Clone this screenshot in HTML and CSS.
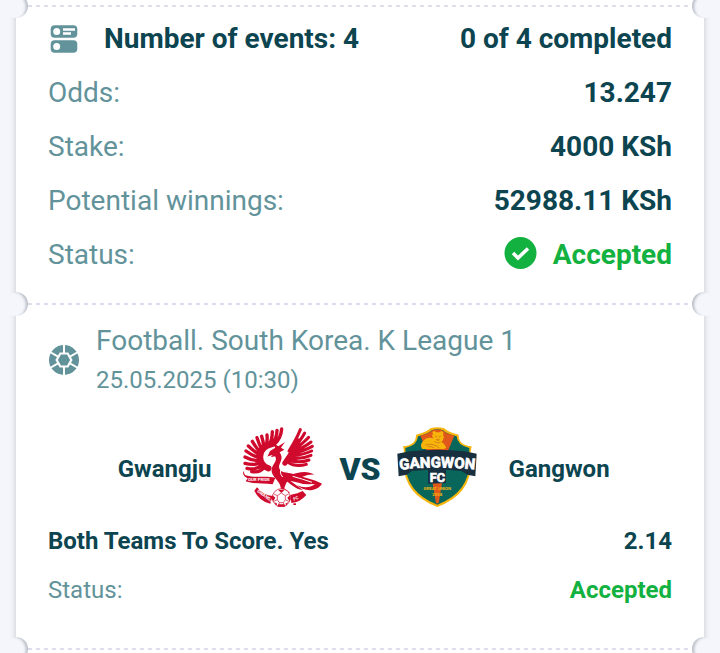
FILE: index.html
```html
<!DOCTYPE html>
<html lang="en">
<head>
<meta charset="UTF-8">
<meta name="viewport" content="width=device-width, initial-scale=1.0">
<title>Bet slip</title>
<link rel="stylesheet" href="styles.css">
</head>
<body>

<main class="ticket">
    <div class="divider"></div>

    <section class="summary">
        <header class="summary-head">
            <svg class="icon" viewBox="0 0 32 32" aria-hidden="true">
                <rect x="2.700" y="2.300" width="26.600" height="12.500" rx="4" fill="#62939a"/>
                <rect x="2.700" y="17.300" width="26.600" height="12.500" rx="4" fill="#62939a"/>
                <circle cx="8.700" cy="8.600" r="3.500" fill="#fff"/>
                <circle cx="8.700" cy="23.500" r="3.500" fill="#fff"/>
                <path d="M15 6.600h12M15 10.600h8" stroke="#fff" stroke-width="2.500"/>
            </svg>
            <h2>Number of events: 4</h2>
            <strong>0 of 4 completed</strong>
        </header>
        <dl class="totals">
            <div class="row"><dt>Odds:</dt><dd>13.247</dd></div>
            <div class="row"><dt>Stake:</dt><dd>4000 KSh</dd></div>
            <div class="row"><dt>Potential winnings:</dt><dd>52988.11 KSh</dd></div>
            <div class="row">
                <dt>Status:</dt>
                <dd class="accepted">
                    <svg class="icon" viewBox="0 0 32 32" aria-hidden="true">
                        <circle cx="15.500" cy="14" r="16" fill="#12b140"/>
                        <path d="M8 14l5 5 10-9.500" fill="none" stroke="#fff" stroke-width="3.500"/>
                    </svg>
                    Accepted
                </dd>
            </div>
        </dl>
    </section>

    <div class="divider"></div>

    <section class="event">
        <header class="event-head">
            <svg class="icon" viewBox="0 0 32 32" aria-hidden="true">
                <circle cx="16" cy="16" r="15" fill="#62939a"/>
                <path d="M7.400 16l4.300-7.400h8.600l4.300 7.400-4.300 7.400h-8.600z" fill="#fff"/>
                <path d="M16 0v9M16 23v9M2 8l8 4.600M22 19.400l8 4.600M30 8l-8 4.600M10 19.400L2 24" stroke="#fff" stroke-width="2"/>
                <path d="M9.900 16l3-5.400h6.200l3 5.400-3 5.400h-6.200z" fill="#62939a"/>
            </svg>
            <div>
                <h3>Football. South Korea. K League 1</h3>
                <time datetime="2025-05-25T10:30">25.05.2025 (10:30)</time>
            </div>
        </header>

        <div class="teams">
            <span class="team home">Gwangju</span>
            <svg class="crest" viewBox="42 36 240 240" aria-hidden="true">
                <g fill="none" stroke="#cf0a2c" stroke-linecap="round">
                    <!-- left wing -->
                    <path stroke-width="10" d="M138 86Q156 68 158 42M128 88Q144 70 144 46M119 91Q130 75 130 50M111 94Q116 78 114 60M104 100Q104 80 98 64M100 108Q90 86 84 68M96 115Q80 96 70 79M94 122Q74 108 58 93M92 129Q70 122 51 108M93 136Q70 138 48 126M96 143Q74 152 48 145M100 150Q82 166 54 160M106 156Q94 174 68 170"/>
                    <path stroke-width="19" d="M132 86Q92 94 93 126Q94 152 118 160"/>
                    <!-- right wing -->
                    <path stroke-width="9" d="M180 108Q202 74 214 44M184 110Q216 76 227 54M186 112Q226 82 239 67M187 114Q224 98 246 81M188 118Q224 108 250 94M186 123Q222 120 248 108M183 129Q216 134 246 121M180 135Q210 146 240 135M176 141Q200 158 232 148"/>
                    <path stroke-width="16" d="M207 78Q192 112 168 144"/>
                </g>
                <g fill="#cf0a2c">
                    <!-- head, body and tail -->
                    <path d="M115 125l8-17 16-10-8-14 17 10 20-13-12 17 10 6-14 8c14 20-2 32-2 44 2 20 22 14 46 22 30 10 54 14 83 28-14 24-53 26-75 5 18 8 38 9 54-3-26-2-51-11-81-12-7 8-9 20-14 30l-6-1c-2-28-25-35-29-55-3-20 21-31 10-46l-13 3 6-7-12 3z"/>
                    <path d="M178 181c34-10 54-16 79-2-26-2-40 10-60 15l55 12c-26 7-48-6-68-8l38 27c-25-2-35-18-50-26z"/>
                    <path d="M155 206h7v30h-10l4-7zM164 219l18 13-4 4-18-12z"/>
                    <!-- ribbons -->
                    <path d="M43 168l5 12c22 10 64 2 91 8l-8 20c-34-5-58 0-81-9l6-9c-10-4-16-11-13-22z"/>
                    <path d="M84 217q20 25 47 26l-7 23q-34-8-48-39zM184 240q24-5 37-12l11 12q-20 23-45 24z"/>
                </g>
                <path d="M160 157q-12 14 1 29M191 184q30 8 58 18" fill="none" stroke="#fff" stroke-width="3"/>
                <g class="ribbon-text">
                    <text x="57" y="199">OUR PRIDE</text>
                    <text x="83" y="230" transform="rotate(36 83 230)">GWANGJU</text>
                    <text x="195" y="257" transform="rotate(-22 195 257)">FC</text>
                </g>
                <!-- ball -->
                <circle cx="157" cy="248" r="27" fill="#fff" stroke="#cf0a2c" stroke-width="2"/>
                <path d="M157 234l-12 8v12l6 9h12l6-9v-12zM145 242l-10-5M169 242l10-5M145 254l-12 6M169 254l12 6M151 263l-3 9M163 263l3 9" fill="none" stroke="#cf0a2c" stroke-width="2"/>
                <path d="M147 224h20l-10 10zM130 240l9 8-6 10-4-4zM184 240l-9 8 6 10 4-4zM148 268h18l3 7h-24zM137 262l8 4-4 6zM177 262l-8 4 4 6z" fill="#cf0a2c"/>
                <path d="M193 265h8v5h-8z" fill="#cf0a2c"/>
            </svg>
            <span class="versus">VS</span>
            <svg class="crest" viewBox="201 36 240 240" aria-hidden="true">
                <path d="M258 59Q291 51 301 40Q322 33 343 40Q353 51 386 59Q385 90 425 94Q420 112 423 130Q430 236 322 276Q214 236 221 130Q224 112 219 94Q259 90 258 59z" fill="#f7b50c"/>
                <path d="M264 64Q295 57 305 46Q322 40 339 46Q349 57 380 64Q382 92 418 99L417 140Q420 230 322 269Q224 230 227 140L226 99Q262 92 264 64z" fill="#08675a"/>
                <path d="M271 62Q297 56 307 46Q322 41 337 46Q347 56 373 62L351 115L326 265L318 265L293 115z" fill="#e0591b"/>
                <!-- bear -->
                <path d="M309 57q-4-7 2-8 5-1 7 3h11q3-5 8-3 5 2 2 9 5 9 0 17l-4 6q10 6 14 17l-7 4h-65q-7-9-2-18 12-20 36-14l-4-5q-2-4 2-8z" fill="#f7b50c"/>
                <path d="M315 63l7 3M333 63l-7 3M319 73h9l-4 5zM313 79l9 5 10-3M286 90q18-6 32 2l10 7M293 95q10-2 20 4" fill="none" stroke="#cf7a13" stroke-width="2.500"/>
                <!-- wordmark -->
                <path d="M202 116l38-7q82-10 164 0l36 7-4 68-24-5-18-11-46-4v40l-54 2v-42l-48 4-16 11-24 5z" fill="#182f40"/>
                <path id="arc" d="M202 165Q322 150 442 165" fill="none"/>
                <text class="wordmark"><textPath href="#arc" startOffset="50%">GANGWON</textPath></text>
                <text class="fc" x="322" y="202">FC</text>
                <text class="motto" x="322" y="226">GREAT UNION</text>
                <text class="motto" x="322" y="244">2008</text>
            </svg>
            <span class="team">Gangwon</span>
        </div>

        <div class="row market"><strong>Both Teams To Score. Yes</strong><strong>2.14</strong></div>
        <div class="row market"><span>Status:</span><strong class="accepted">Accepted</strong></div>
    </section>

    <div class="divider"></div>
</main>

</body>
</html>
```

FILE: styles.css
```css
* {
    box-sizing: border-box;
}

body {
    margin: 0;
    height: 100vh;
    overflow: hidden;
    background: #f4f6fb;
    color: #0c4450;
    font-family: Roboto, sans-serif;
    font-size: 28px;
    line-height: 34px;
}

h2, h3, dl, dd {
    margin: 0;
    font-size: inherit;
}

.ticket {
    margin: -6px 16px 0;
    background: #fff;
    box-shadow: 0 0 6px rgba(40, 50, 70, 0.25);
}

/* perforated line with a round cut at each end */
.divider {
    position: relative;
    height: 24px;
    padding: 11px 12px;
    background: repeating-linear-gradient(to right, #dcdfeb 0 4px, transparent 4px 8px) content-box;
}

.divider::before,
.divider::after {
    content: "";
    position: absolute;
    top: 0;
    width: 24px;
    height: 24px;
    border-radius: 50%;
    background: #f4f6fb;
}

.divider::before {
    left: -12px;
    box-shadow: inset -4px 1px 3px -2px rgba(40, 50, 70, 0.3);
}

.divider::after {
    right: -12px;
    box-shadow: inset 4px 1px 3px -2px rgba(40, 50, 70, 0.3);
}

.icon {
    flex: none;
    width: 32px;
    height: 32px;
    overflow: visible;
}

.summary {
    padding: 4px 32px 20px;
}

.summary-head {
    display: flex;
    align-items: center;
    margin-bottom: 20px;
}

.summary-head h2 {
    flex: 1;
    margin-left: 24px;
}

.totals {
    display: flex;
    flex-direction: column;
    gap: 20px;
}

.row {
    display: flex;
    justify-content: space-between;
    color: #62939a;
}

.row dd,
.row strong {
    color: #0c4450;
    font-weight: 700;
}

.row .accepted {
    display: flex;
    align-items: center;
    gap: 16px;
    color: #12b140;
}

.event {
    padding: 8px 32px 32px;
}

.event-head {
    display: flex;
    align-items: center;
    gap: 16px;
    color: #62939a;
}

.event-head h3 {
    margin-bottom: 7px;
    font-weight: 400;
}

.event-head time {
    display: block;
    font-size: 24px;
    line-height: 30px;
}

.teams {
    display: grid;
    grid-template-columns: 1fr auto auto auto 1fr;
    align-items: center;
    gap: 16px;
    margin-top: 32px;
    font-size: 24px;
    font-weight: 700;
}

.team,
.versus {
    padding-top: 4px;
}

.team {
    margin: 0 16px;
}

.home {
    text-align: right;
}

.versus {
    font-size: 32px;
    font-weight: 900;
}

.crest {
    width: 80px;
    height: 80px;
}

.ribbon-text {
    fill: #fff;
    font-size: 13px;
    font-weight: 700;
}

.wordmark,
.fc {
    fill: #fff;
    stroke: #fff;
    stroke-width: 2px;
    font-size: 45px;
    font-weight: 700;
    text-anchor: middle;
}

.fc {
    font-size: 38px;
}

.motto {
    fill: #f7b50c;
    font-size: 13px;
    font-weight: 700;
    text-anchor: middle;
}

.market {
    margin-top: 19px;
    font-size: 24px;
    line-height: 30px;
}
```
